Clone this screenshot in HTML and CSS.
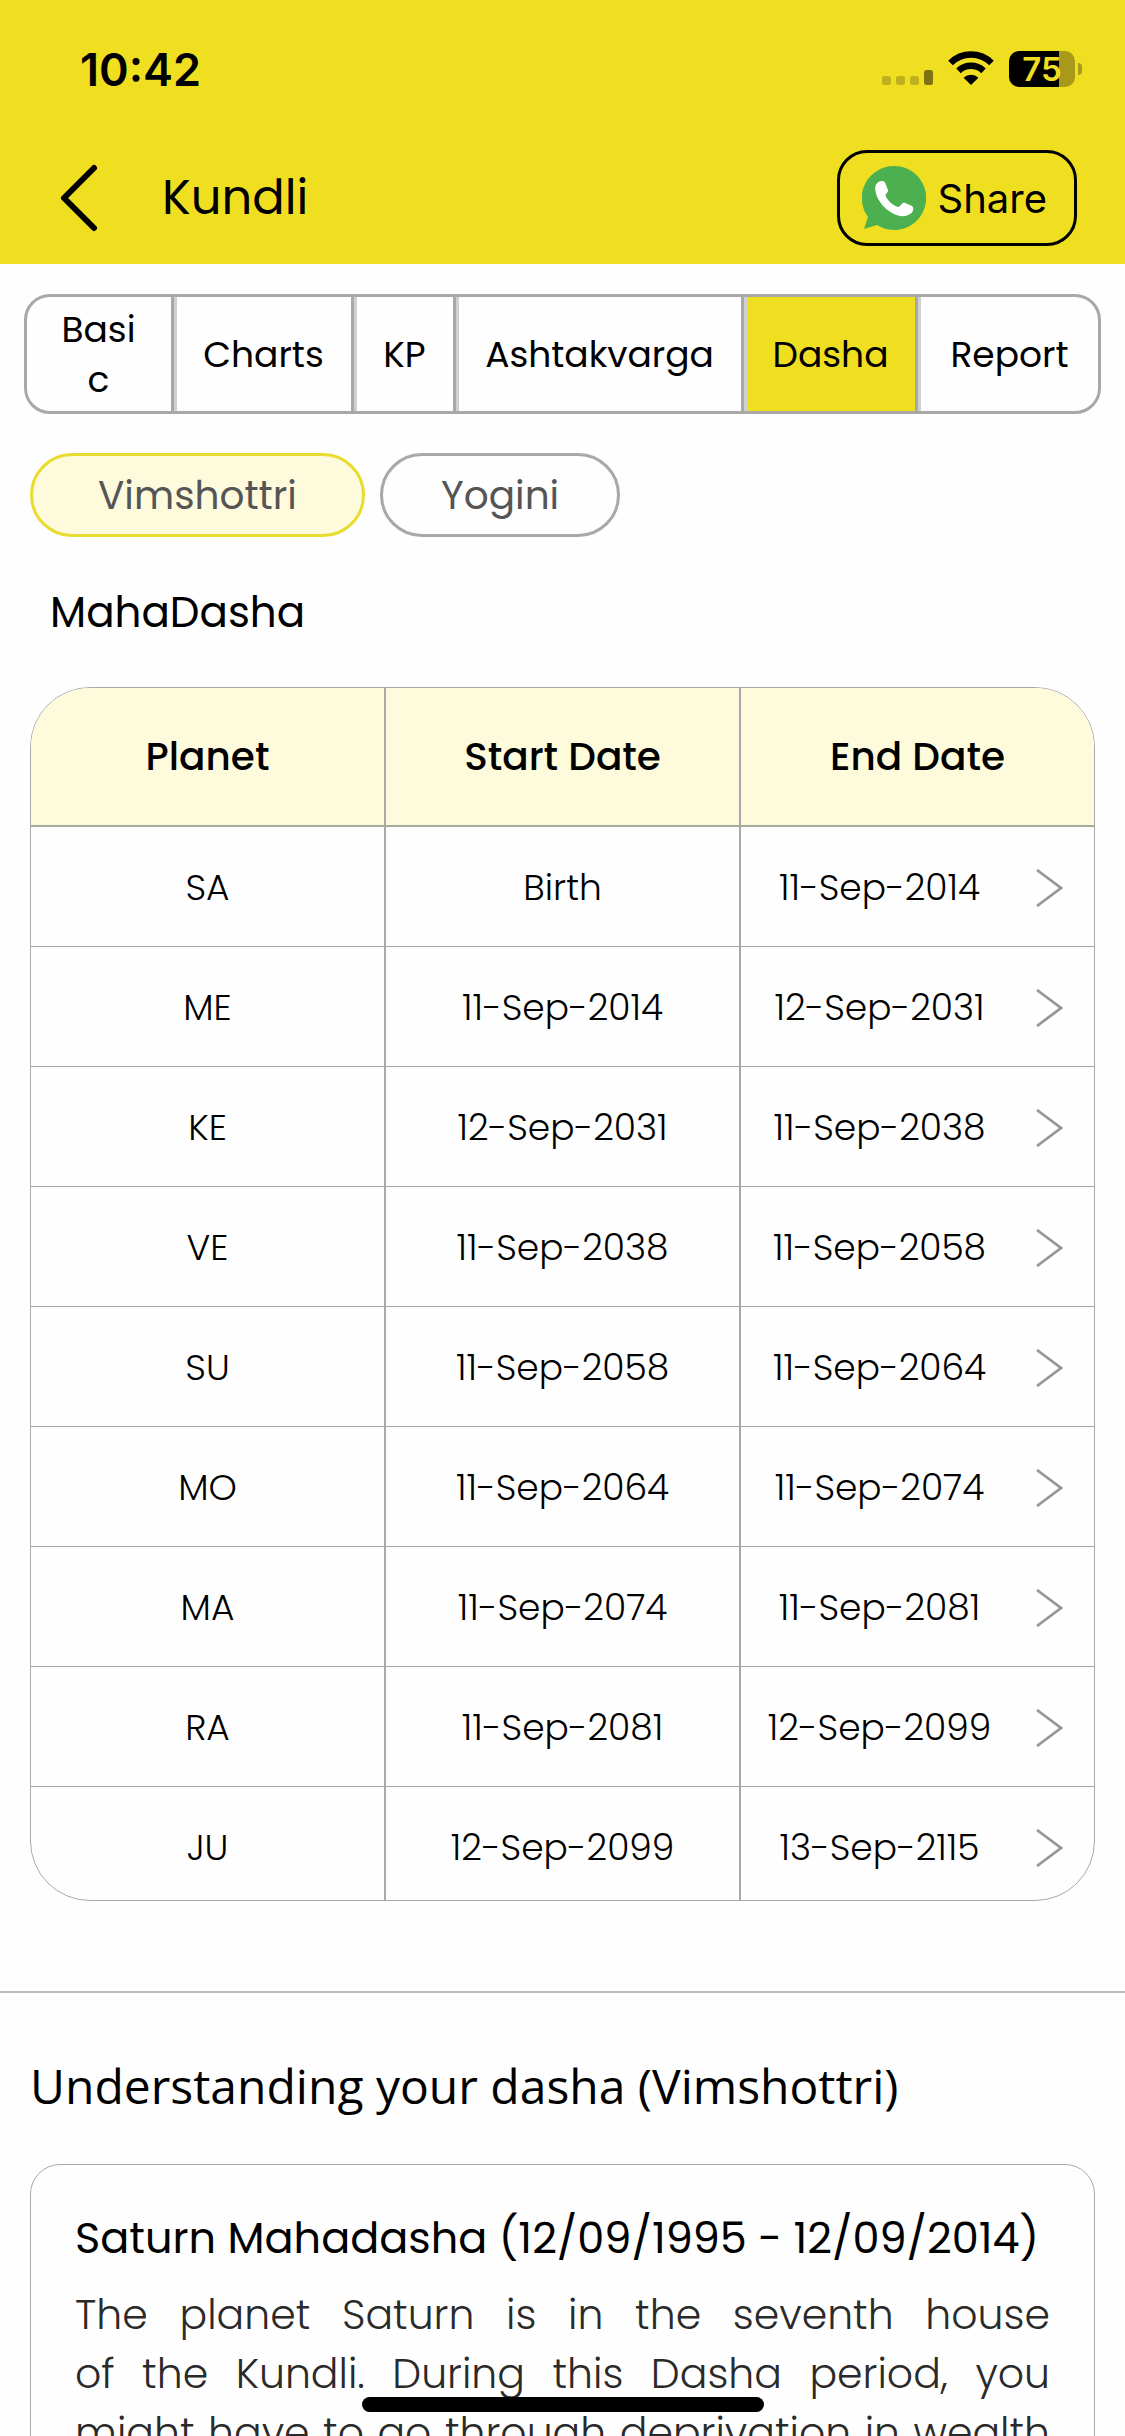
FILE: index.html
```html
<!DOCTYPE html>
<html lang="en">
<head>
  <meta charset="UTF-8" />
  <meta name="viewport" content="width=device-width, initial-scale=1.0" />
  <title>Kundli</title>
  <link rel="stylesheet" href="styles.css">
</head>
<body>
  <svg width="0" height="0" class="sprite" aria-hidden="true">
    <symbol id="chevron" viewBox="0 0 30 42">
      <path d="M3 3 L27 21 L3 39" fill="none" stroke="#969696" stroke-width="2.8" />
    </symbol>
  </svg>

  <header class="header">
    <div class="status-bar">
      <span class="time">10:42</span>
      <div class="status-icons">
        <svg width="52" height="36" viewBox="0 0 52 36" aria-label="Signal">
          <g fill="#c1b01d">
            <rect x="1" y="25" width="9" height="9" rx="2.5" />
            <rect x="15" y="25" width="9" height="9" rx="2.5" />
            <rect x="29" y="25" width="9" height="9" rx="2.5" />
          </g>
          <rect x="43" y="19" width="9" height="15" rx="2.5" fill="#7d7312" />
        </svg>
        <svg width="46" height="36" viewBox="0 0 46 36" aria-label="Wi-Fi">
          <g fill="none" stroke="#000" stroke-width="6.5">
            <path d="M2.5 12 A29 29 0 0 1 43.5 12" />
            <path d="M10.5 19.8 A18 18 0 0 1 35.5 19.8" />
          </g>
          <path d="M23 34 L15.6 26.8 A10.5 10.5 0 0 1 30.4 26.8 Z" />
        </svg>
        <div class="battery">
          <span class="battery-level">75</span>
        </div>
      </div>
    </div>
    <div class="title-bar">
      <button class="back-btn" aria-label="Back">
        <svg width="40" height="70" viewBox="0 0 40 70">
          <path d="M35 5 L5 35 L35 65" fill="none" stroke="#000" stroke-width="6" stroke-linecap="round" stroke-linejoin="round" />
        </svg>
      </button>
      <h1>Kundli</h1>
      <button class="share-btn">
        <svg width="64" height="64" viewBox="0 0 64 64" aria-hidden="true">
          <path d="M32 0 A32 32 0 1 1 15 59 L2 63 L6 51 A32 32 0 0 1 32 0 Z" fill="#4caf50" />
          <path d="M16.500 16 C19 14.500 22 14.500 23 16.500 L26 24 C26.500 26 23.500 28 23.500 29.500 C25 34 31 39.500 36 41 C38 41.200 39.500 37 42 36.500 L50 40 C52 41.500 51.500 45 49.500 47 C46.500 50 41 51 36 49.500 C25 46 15.500 36 13.500 25.500 C12.800 21.500 13.500 18 16.500 16 Z" fill="#fff" />
        </svg>
        Share
      </button>
    </div>
  </header>

  <main>
    <nav class="tabs">
      <button>Basi<br>c</button>
      <button>Charts</button>
      <button>KP</button>
      <button>Ashtakvarga</button>
      <button class="active">Dasha</button>
      <button>Report</button>
    </nav>

    <div class="pills">
      <button class="pill active">Vimshottri</button>
      <button class="pill">Yogini</button>
    </div>

    <h2 class="table-title">MahaDasha</h2>

    <div class="table-wrapper">
      <table>
        <thead>
          <tr><th>Planet</th><th>Start Date</th><th>End Date</th></tr>
        </thead>
        <tbody>
          <tr>
            <td>SA</td><td>Birth</td>
            <td><div class="end-date"><span>11-Sep-2014</span><button aria-label="Open SA"><svg width="30" height="42"><use href="#chevron" /></svg></button></div></td>
          </tr>
          <tr>
            <td>ME</td><td>11-Sep-2014</td>
            <td><div class="end-date"><span>12-Sep-2031</span><button aria-label="Open ME"><svg width="30" height="42"><use href="#chevron" /></svg></button></div></td>
          </tr>
          <tr>
            <td>KE</td><td>12-Sep-2031</td>
            <td><div class="end-date"><span>11-Sep-2038</span><button aria-label="Open KE"><svg width="30" height="42"><use href="#chevron" /></svg></button></div></td>
          </tr>
          <tr>
            <td>VE</td><td>11-Sep-2038</td>
            <td><div class="end-date"><span>11-Sep-2058</span><button aria-label="Open VE"><svg width="30" height="42"><use href="#chevron" /></svg></button></div></td>
          </tr>
          <tr>
            <td>SU</td><td>11-Sep-2058</td>
            <td><div class="end-date"><span>11-Sep-2064</span><button aria-label="Open SU"><svg width="30" height="42"><use href="#chevron" /></svg></button></div></td>
          </tr>
          <tr>
            <td>MO</td><td>11-Sep-2064</td>
            <td><div class="end-date"><span>11-Sep-2074</span><button aria-label="Open MO"><svg width="30" height="42"><use href="#chevron" /></svg></button></div></td>
          </tr>
          <tr>
            <td>MA</td><td>11-Sep-2074</td>
            <td><div class="end-date"><span>11-Sep-2081</span><button aria-label="Open MA"><svg width="30" height="42"><use href="#chevron" /></svg></button></div></td>
          </tr>
          <tr>
            <td>RA</td><td>11-Sep-2081</td>
            <td><div class="end-date"><span>12-Sep-2099</span><button aria-label="Open RA"><svg width="30" height="42"><use href="#chevron" /></svg></button></div></td>
          </tr>
          <tr>
            <td>JU</td><td>12-Sep-2099</td>
            <td><div class="end-date"><span>13-Sep-2115</span><button aria-label="Open JU"><svg width="30" height="42"><use href="#chevron" /></svg></button></div></td>
          </tr>
        </tbody>
      </table>
    </div>

    <section class="about">
      <h2>Understanding your dasha (Vimshottri)</h2>
      <article class="card">
        <h3>Saturn Mahadasha (12/09/1995 - 12/09/2014)</h3>
        <p>
          <span>The planet Saturn is in the seventh house</span>
          <span>of the Kundli. During this Dasha period, you</span>
          <span>might have to go through deprivation in wealth</span>
        </p>
      </article>
    </section>
  </main>

  <div class="home-indicator"></div>
</body>
</html>
```

FILE: styles.css
```css
* {
  box-sizing: border-box;
}

body {
  margin: 0;
  height: 100vh;
  overflow: hidden;
  display: flex;
  flex-direction: column;
  background: #fefefe;
  color: #000;
  font-family: Poppins, Inter, sans-serif;
}

h1, h2, h3, p {
  margin: 0;
  font-weight: 400;
}

button {
  margin: 0;
  padding: 0;
  border: none;
  background: none;
  color: inherit;
  font: inherit;
  cursor: pointer;
}

svg {
  display: block;
}

.sprite {
  position: absolute;
}

/* header */

.header {
  flex: none;
  background: #f0df20;
  padding-bottom: 18px;
}

.status-bar {
  display: flex;
  align-items: center;
  justify-content: space-between;
  height: 138px;
  padding: 0 42px 0 80px;
}

.time {
  font-family: Inter, sans-serif;
  font-size: 45px;
  font-weight: 600;
}

.status-icons {
  display: flex;
  align-items: center;
  gap: 15px;
}

.battery {
  position: relative;
  width: 66px;
  height: 36px;
  border-radius: 10px;
  background: linear-gradient(to right, #000 76%, #a8991a 76%);
  margin-right: 8px;
}

.battery::after {
  content: "";
  position: absolute;
  left: 69px;
  top: 12px;
  width: 4px;
  height: 12px;
  border-radius: 0 4px 4px 0;
  background: #a8991a;
}

.battery-level {
  display: block;
  color: #f0df20;
  font-family: Inter, sans-serif;
  font-size: 33px;
  font-weight: 600;
  line-height: 37px;
  text-align: center;
}

.title-bar {
  display: flex;
  align-items: center;
  height: 108px;
  padding: 12px 48px 0 59px;
}

.title-bar h1 {
  flex: 1;
  margin-left: 63px;
  font-size: 48px;
}

.share-btn {
  display: flex;
  align-items: center;
  gap: 12px;
  height: 96px;
  padding: 0 27px 0 22px;
  border: 3px solid #000;
  border-radius: 30px;
  font-family: Inter, sans-serif;
  font-size: 40px;
}

/* tabs */

main {
  flex: 1;
  min-height: 0;
  overflow: hidden;
}

.tabs {
  display: grid;
  grid-template-columns: 150fr 180fr 102fr 288fr 174fr 177fr;
  height: 120px;
  margin: 30px 24px 0;
  border: 3px solid #a8a8a8;
  border-radius: 26px;
  overflow: hidden;
}

.tabs button {
  padding: 2px 4px 0 0;
  border-right: 3px solid #d0d0d0;
  box-shadow: inset -3px 0 #a8a8a8;
  font-size: 36px;
  line-height: 50px;
}

.tabs button:last-child {
  padding-right: 0;
  border-right: none;
  box-shadow: none;
}

.tabs .active {
  background: #f0df20;
}

.pills {
  display: flex;
  gap: 15px;
  margin: 39px 30px 0;
}

.pill {
  height: 84px;
  padding: 0 58px;
  border: 3px solid #a8a8a8;
  border-radius: 42px;
  color: #555;
  font-size: 39px;
}

.pill.active {
  padding: 0 65px;
  border-color: #e8dc30;
  background: #fefadc;
}

/* dasha table */

.table-title {
  margin: 47px 50px 45px;
  font-size: 42px;
  line-height: 58px;
}

.table-wrapper {
  margin: 0 30px;
  border: 1px solid #a9a9a9;
  border-radius: 60px;
  overflow: hidden;
}

table {
  width: 100%;
  table-layout: fixed;
  border-collapse: separate;
  border-spacing: 0;
  text-align: center;
}

th {
  height: 139px;
  padding: 0;
  border-bottom: 2px solid #a9a9a0;
  background: #fefadc;
  font-size: 39px;
  font-weight: 500;
}

td {
  height: 120px;
  padding: 2px 0 0;
  border-bottom: 1px solid #a9a9a9;
  font-size: 36px;
  font-weight: 300;
}

th:not(:last-child) {
  width: 33.4%;
}

th:not(:last-child),
td:not(:last-child) {
  border-right: 2px solid #a9a9a9;
}

tr:last-child td {
  height: 113px;
  padding-top: 8px;
  border-bottom: none;
}

.end-date {
  display: flex;
  align-items: center;
}

.end-date span {
  flex: 1;
}

.end-date button {
  padding: 0 30px 0 16px;
}

/* explanation */

.about {
  margin-top: 90px;
  padding: 59px 30px 0;
  border-top: 2px solid #bbb;
}

.about h2 {
  font-family: "Open Sans", "Noto Sans", sans-serif;
  font-size: 48px;
  line-height: 68px;
}

.card {
  margin-top: 44px;
  padding: 42px 44px;
  border: 1px solid #a9a9a9;
  border-radius: 30px;
}

.card h3 {
  font-size: 43px;
  line-height: 62px;
}

.card p {
  margin-top: 16px;
  color: #2a2a2a;
  font-size: 41px;
  font-weight: 300;
  line-height: 59px;
}

.card p span {
  display: block;
  text-align: justify;
  text-align-last: justify;
}

.home-indicator {
  position: fixed;
  bottom: 24px;
  left: 50%;
  width: 402px;
  height: 15px;
  margin-left: -201px;
  border-radius: 8px;
  background: #000;
}
```
